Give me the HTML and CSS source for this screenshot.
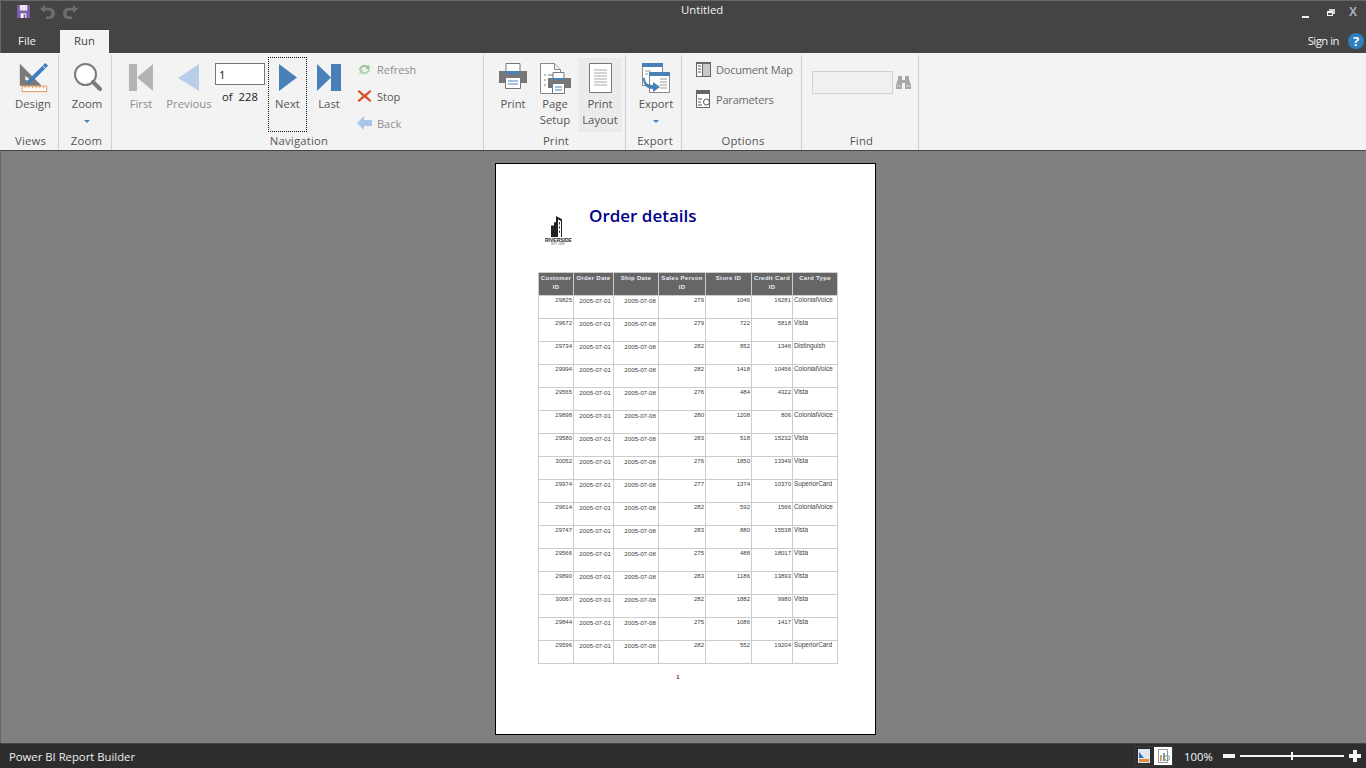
FILE: index.html
```html
<!DOCTYPE html>
<html lang="en">
<head>
  <meta charset="UTF-8">
  <title>Untitled</title>
  <link rel="stylesheet" href="styles.css">
</head>
<body>
<div class="app">
  <!-- title bar -->
  <div class="titlebar">
    <div class="quick">
      <svg class="save" width="13" height="13" viewBox="0 0 14 14"><path d="M0 0h14v14H0z" fill="#7d5ea8"/><path d="M3 0h8v6H3z" fill="#e8e4f0"/><path d="M4 9h6v5H4z" fill="#fff"/><path d="M7 10h2v4H7z" fill="#7d5ea8"/></svg>
      <svg width="16" height="15" viewBox="0 0 16 15"><path d="M6 1 1 5l5 4V6.500h3c2.500 0 3.500 1.500 3.500 3S11.500 12.500 9 12.500H7V15h3c3.500 0 6-2.200 6-5.500S13.500 3.800 10 3.800H6z" fill="#6d6d6d"/></svg>
      <svg width="16" height="15" viewBox="0 0 16 15"><path d="M10 1l5 4-5 4V6.500H7c-2.500 0-3.500 1.500-3.500 3s1 3 3.500 3h2V15H6c-3.500 0-6-2.200-6-5.500s2.500-5.700 6-5.700h4z" fill="#6d6d6d"/></svg>
    </div>
    <div class="doc-title">Untitled</div>
    <div class="win-btns">
      <span class="win-min"></span>
      <svg width="8" height="7" viewBox="0 0 8 7"><path d="M2 0h6v5H2z" fill="#c8cdd4"/><path d="M0 2h6v5H0z" fill="#f0f2f5"/><path d="M1 4h4v2H1z" fill="#555"/></svg>
      <span class="win-close">X</span>
    </div>
  </div>
  <div class="tabs">
    <span class="tab">File</span>
    <span class="tab tab-active">Run</span>
    <span class="signin">Sign in</span>
    <span class="help">?</span>
  </div>

  <!-- ribbon -->
  <div class="ribbon">
    <div class="group group-views">
      <div class="group-body">
        <div class="btn btn-design">
          <svg class="icon" viewBox="0 0 34 34"><path d="M2 2v24h24z M8 15v5h6z" fill="#7a7a7a" fill-rule="evenodd"/><path d="M30 1l3 3-18 18-5 2 2-5z" fill="#3f7cc0"/><path d="M27 4l3 3" stroke="#fff"/><path d="M4.500 26.500h27v6h-27z" fill="#fff" stroke="#e08a3c"/><path d="M8 27v2M12 27v2M16 27v2M20 27v2M24 27v2M28 27v2" stroke="#e08a3c"/></svg>
          <span>Design</span>
        </div>
      </div>
      <div class="group-label">Views</div>
    </div>

    <div class="group group-zoom">
      <div class="group-body">
        <div class="btn btn-zoom">
          <svg class="icon" width="30" height="34" viewBox="0 0 30 34"><circle cx="13.500" cy="17.500" r="10.500" fill="#fff" stroke="#7b7b7b" stroke-width="2"/><path d="M21 25l7 7" stroke="#7b7b7b" stroke-width="4" stroke-linecap="round"/></svg>
          <span>Zoom</span>
          <i class="caret"></i>
        </div>
      </div>
      <div class="group-label">Zoom</div>
    </div>

    <div class="group group-nav">
      <div class="group-body">
        <div class="btn btn-first off">
          <svg class="icon" width="24" height="27" viewBox="0 0 24 27"><path d="M0 0h8v27H0zM24 0v27L8 13.500z" fill="#b4b4b4"/></svg>
          <span>First</span>
        </div>
        <div class="btn btn-prev off">
          <svg class="icon" width="22" height="27" viewBox="0 0 22 27"><path d="M21 0v27L0 14z" fill="#b9cfe9"/></svg>
          <span>Previous</span>
        </div>
        <div class="pager">
          <input class="page-input" type="text" value="1">
          <div class="page-of">of&nbsp; 228</div>
        </div>
        <div class="btn btn-next">
          <svg class="icon" width="18" height="27" viewBox="0 0 18 27"><path d="M0 0v27l18-13.500z" fill="#4a80b8"/></svg>
          <span>Next</span>
        </div>
        <div class="btn btn-last">
          <svg class="icon" width="24" height="27" viewBox="0 0 24 27"><path d="M0 0v27l14-13.500zM14 0h10v27H14z" fill="#4a80b8"/></svg>
          <span>Last</span>
        </div>
        <div class="small-col">
          <div class="small off">
            <svg width="15" height="13" viewBox="0 0 15 13"><path d="M2 7a5.500 5.500 0 0 1 9-4l1.500-1.500V6H8l1.500-1.500A3.500 3.500 0 0 0 4 7z" fill="#9cc79c"/><path d="M13 6a5.500 5.500 0 0 1-9 4l-1.500 1.500V7H7L5.500 8.500A3.500 3.500 0 0 0 11 6z" fill="#b5d6b5"/></svg>
            <span>Refresh</span>
          </div>
          <div class="small small-stop">
            <svg width="15" height="14" viewBox="0 0 15 14"><path d="M2 1l5.500 4.500L13 1l1.500 1.500L9.500 7l5 4.500-1.500 1.500-5.500-4.500L2 13 .5 11.500l5-4.500-5-4.500z" fill="#d9532c"/></svg>
            <span>Stop</span>
          </div>
          <div class="small off">
            <svg width="15" height="14" viewBox="0 0 15 14"><path d="M7 0v4h8v6H7v4L0 7z" fill="#a9c6e8"/></svg>
            <span>Back</span>
          </div>
        </div>
      </div>
      <div class="group-label">Navigation</div>
    </div>

    <div class="group group-print">
      <div class="group-body">
        <div class="btn btn-print">
          <svg class="icon" width="28" height="26" viewBox="0 0 28 26"><path d="M7 .500h14v9H7z" fill="#fff" stroke="#777"/><path d="M0 8h28v12H0z" fill="#777"/><path d="M7 8h14v3H7z" fill="#4a80b8"/><path d="M6.500 14.500h15v11h-15z" fill="#fff" stroke="#777"/><path d="M9 18h10" stroke="#4a80b8"/><path d="M9 21h10" stroke="#4a80b8"/></svg>
          <span>Print</span>
        </div>
        <div class="btn btn-setup">
          <svg class="icon" width="31" height="31" viewBox="0 0 31 31"><path d="M.500.500h14l6 6v24H.500z" fill="#fff" stroke="#888"/><path d="M14.500.500v6h6" fill="#eee" stroke="#888"/><path d="M4 12h2M8 12h5M4 17h2M4 22h2" stroke="#777"/><path d="M13 9.500h11v7H13z" fill="#fff" stroke="#777"/><path d="M8 15h23v10H8z" fill="#777"/><path d="M13 15h11v2H13z" fill="#4a80b8"/><path d="M12.500 20.500h12v10h-12z" fill="#fff" stroke="#777"/><path d="M15 24h7M15 27h7" stroke="#4a80b8"/></svg>
          <span>Page<br>Setup</span>
        </div>
        <div class="btn btn-layout">
          <svg class="icon" width="23" height="30" viewBox="0 0 23 30"><path d="M.500.500h22v29H.500z" fill="#fff" stroke="#777"/><path d="M5 7h13M5 10h13M5 13h13M5 16h13M5 19h13M5 22h13" stroke="#aaa"/></svg>
          <span>Print<br>Layout</span>
        </div>
      </div>
      <div class="group-label">Print</div>
    </div>

    <div class="group group-export">
      <div class="group-body">
        <div class="btn btn-export">
          <svg class="icon" width="28" height="30" viewBox="0 0 28 30"><path d="M.500.500h20v22H.500z" fill="#fff" stroke="#888"/><path d="M0 0h21v4H0z" fill="#4a80b8"/><path d="M7.500 9.500h20v20h-20z" fill="#fff" stroke="#888"/><path d="M7 9h21v4H7z" fill="#4a80b8"/><path d="M18 16h7M18 19h7M18 22h7M18 25h7M3 8h6M3 11h3" stroke="#999"/><path d="M3 15c0 5 3 7 8 7v-3l7 5-7 5v-3c-6 0-10-4-10-11z" fill="#4a80b8"/></svg>
          <span>Export</span>
          <i class="caret"></i>
        </div>
      </div>
      <div class="group-label">Export</div>
    </div>

    <div class="group group-options">
      <div class="group-body">
        <div class="small-col opt-col">
          <div class="small">
            <svg width="15" height="15" viewBox="0 0 15 15"><path d="M0 0h15v15H0z" fill="#666"/><path d="M1 2h5v12H1z" fill="#fff"/><path d="M7 2h7v12H7z" fill="#c9c9c9"/><path d="M2 4h3M2 7h3M2 10h3" stroke="#555"/></svg>
            <span>Document Map</span>
          </div>
          <div class="small">
            <svg width="15" height="18" viewBox="0 0 15 18"><path d="M.500.500h13v17H.500z" fill="#fff" stroke="#666"/><path d="M0 0h14v4H0z" fill="#666"/><path d="M2 9h4M2 12h3M2 15h4" stroke="#555"/><circle cx="10.500" cy="12" r="3" fill="none" stroke="#555"/></svg>
            <span>Parameters</span>
          </div>
        </div>
      </div>
      <div class="group-label">Options</div>
    </div>

    <div class="group group-find">
      <div class="group-body">
        <div class="find-box"></div>
        <svg class="binoculars" width="15" height="13" viewBox="0 0 15 13"><path d="M2 0h4v4h3V0h4v3l2 6v4H9V7H6v6H0V9l2-6z" fill="#a8a8a8"/><path d="M1 10h4M10 10h4" stroke="#d8d8d8"/></svg>
      </div>
      <div class="group-label">Find</div>
    </div>
  </div>

  <!-- report -->
  <div class="canvas">
    <div class="page">
      <div class="report-head">
        <div class="logo">
          <svg width="16" height="22" viewBox="0 0 16 21" preserveAspectRatio="none"><path d="M1 10h3V7h2V1l6 3v17H1z" fill="#222"/><path d="M8 4l3 2v15H8z" fill="#fff"/><path d="M9 7h1v2H9zM9 11h1v2H9zM9 15h1v2H9z" fill="#222"/></svg>
          <div class="logo-name">RIVERSIDE</div>
          <div class="logo-sub">EST 1998</div>
        </div>
        <div class="report-title">Order details</div>
      </div>
      <table class="report">
        <colgroup><col class="c1"><col class="c2"><col class="c3"><col class="c4"><col class="c5"><col class="c6"><col class="c7"></colgroup>
        <thead>
          <tr><th>Customer ID</th><th>Order Date</th><th>Ship Date</th><th>Sales Person ID</th><th>Store ID</th><th>Credit Card ID</th><th>Card Type</th></tr>
        </thead>
        <tbody>
          <tr><td>29825</td><td class="d">2005-07-01</td><td class="d">2005-07-08</td><td>279</td><td>1046</td><td>16281</td><td class="t">ColonialVoice</td></tr>
          <tr><td>29672</td><td class="d">2005-07-01</td><td class="d">2005-07-08</td><td>279</td><td>722</td><td>5818</td><td class="t">Vista</td></tr>
          <tr><td>29734</td><td class="d">2005-07-01</td><td class="d">2005-07-08</td><td>282</td><td>852</td><td>1346</td><td class="t">Distinguish</td></tr>
          <tr><td>29994</td><td class="d">2005-07-01</td><td class="d">2005-07-08</td><td>282</td><td>1418</td><td>10456</td><td class="t">ColonialVoice</td></tr>
          <tr><td>29565</td><td class="d">2005-07-01</td><td class="d">2005-07-08</td><td>276</td><td>484</td><td>4322</td><td class="t">Vista</td></tr>
          <tr><td>29898</td><td class="d">2005-07-01</td><td class="d">2005-07-08</td><td>280</td><td>1208</td><td>806</td><td class="t">ColonialVoice</td></tr>
          <tr><td>29580</td><td class="d">2005-07-01</td><td class="d">2005-07-08</td><td>283</td><td>518</td><td>15232</td><td class="t">Vista</td></tr>
          <tr><td>30052</td><td class="d">2005-07-01</td><td class="d">2005-07-08</td><td>276</td><td>1850</td><td>13349</td><td class="t">Vista</td></tr>
          <tr><td>29974</td><td class="d">2005-07-01</td><td class="d">2005-07-08</td><td>277</td><td>1374</td><td>10370</td><td class="t">SuperiorCard</td></tr>
          <tr><td>29614</td><td class="d">2005-07-01</td><td class="d">2005-07-08</td><td>282</td><td>592</td><td>1566</td><td class="t">ColonialVoice</td></tr>
          <tr><td>29747</td><td class="d">2005-07-01</td><td class="d">2005-07-08</td><td>283</td><td>880</td><td>15538</td><td class="t">Vista</td></tr>
          <tr><td>29566</td><td class="d">2005-07-01</td><td class="d">2005-07-08</td><td>275</td><td>488</td><td>18017</td><td class="t">Vista</td></tr>
          <tr><td>29890</td><td class="d">2005-07-01</td><td class="d">2005-07-08</td><td>283</td><td>1186</td><td>13893</td><td class="t">Vista</td></tr>
          <tr><td>30067</td><td class="d">2005-07-01</td><td class="d">2005-07-08</td><td>282</td><td>1882</td><td>9980</td><td class="t">Vista</td></tr>
          <tr><td>29844</td><td class="d">2005-07-01</td><td class="d">2005-07-08</td><td>275</td><td>1086</td><td>1417</td><td class="t">Vista</td></tr>
          <tr><td>29596</td><td class="d">2005-07-01</td><td class="d">2005-07-08</td><td>282</td><td>552</td><td>19204</td><td class="t">SuperiorCard</td></tr>
        </tbody>
      </table>
      <div class="page-no">1</div>
    </div>
  </div>

  <!-- status bar -->
  <div class="statusbar">
    <span class="app-name">Power BI Report Builder</span>
    <div class="view-btns">
      <span class="view-btn">
        <svg width="14" height="14" viewBox="0 0 14 14"><path d="M1 0h12v14H1z" fill="#dfe6ee"/><path d="M2 3l5 6H2z" fill="#2f6fb0"/><path d="M2 10h10v3H2z" fill="#e08a3c"/></svg>
      </span>
      <span class="view-btn view-on">
        <svg width="14" height="14" viewBox="0 0 14 14"><path d="M2.500.500h9v13h-9z" fill="#fff" stroke="#999"/><path d="M4 6h2v6H4z" fill="#e0a050"/><path d="M7 4h2v8H7z" fill="#6a9bcf"/><circle cx="11" cy="9" r="2.500" fill="none" stroke="#6aa86a"/></svg>
      </span>
    </div>
    <span class="zoom-pct">100%</span>
    <span class="zoom-minus"></span>
    <span class="zoom-track"><i></i></span>
    <span class="zoom-plus"></span>
  </div>
</div>
</body>
</html>
```

FILE: styles.css
```css
* {
  box-sizing: border-box;
}
html, body {
  margin: 0;
  height: 100%;
  overflow: hidden;
}
body {
  font-family: "Open Sans", "Noto Sans", sans-serif;
  font-size: 11.3px;
}
.app {
  width: 1366px;
  height: 768px;
  display: flex;
  flex-direction: column;
  background: #808080;
}

/* title bar */
.titlebar {
  height: 30px;
  background: #444;
  border-top: 1px solid #666;
  border-left: 1px solid #666;
  display: flex;
  position: relative;
  flex: none;
}
.quick {
  display: flex;
  gap: 8px;
  padding: 3px 0 0 15px;
  align-items: flex-start;
}
.quick .save {
  margin: 1px 1px 0 1px;
}
.doc-title {
  position: absolute;
  left: 680px;
  top: 1px;
  color: #f2f2f2;
  font-size: 11.3px;
}
.win-btns {
  margin-left: auto;
  width: 66px;
  display: flex;
  align-items: flex-start;
  color: #fff;
  position: relative;
}
.win-min {
  width: 7px;
  height: 2px;
  background: #eef1f5;
  margin: 15px 0 0 2px;
}
.win-btns svg {
  margin: 8px 0 0 18px;
}
.win-close {
  margin: 4px 0 0 14px;
  font: bold 12px "Liberation Sans", sans-serif;
  color: #aab0b8;
}
.tabs {
  height: 23px;
  background: #444;
  border-left: 1px solid #666;
  display: flex;
  align-items: flex-end;
  flex: none;
  color: #f5f5f5;
}
.tab {
  height: 23px;
  line-height: 21px;
  text-align: center;
}
.tab:first-child {
  width: 59px;
  padding-right: 7px;
}
.tab-active {
  width: 49px;
  background: #f3f3f3;
  color: #444;
}
.signin {
  margin-left: auto;
  margin-right: 9px;
  line-height: 21px;
  height: 23px;
  letter-spacing: -.5px;
}
.help {
  width: 16px;
  height: 16px;
  border-radius: 50%;
  background: #2f7fc1;
  color: #fff;
  font-weight: bold;
  font-size: 13px;
  line-height: 16px;
  text-align: center;
  margin: 0 2px 4px 0;
}

/* ribbon */
.ribbon {
  height: 98px;
  background: #f3f3f3;
  border-bottom: 1px solid #444;
  display: flex;
  flex: none;
  color: #555;
}
.group {
  display: flex;
  flex-direction: column;
  border-right: 1px solid #cfcfcf;
  margin-top: 2px;
  flex: none;
}
.group-body {
  height: 77px;
  flex: none;
  display: flex;
  align-items: flex-start;
}
.group-label {
  height: 18px;
  line-height: 18px;
  padding-left: 3px;
  letter-spacing: .2px;
  text-align: center;
  color: #555;
  flex: none;
}
.group-views { width: 59px; }
.group-zoom { width: 53px; }
.group-nav { width: 372px; }
.group-print { width: 142px; }
.group-export { width: 56px; }
.group-options { width: 120px; }
.group-find { width: 117px; }

.btn {
  display: flex;
  flex-direction: column;
  align-items: center;
  text-align: center;
  line-height: 16px;
  flex: none;
  height: 75px;
  margin-top: 2px;
  color: #555;
}
.btn .icon {
  display: block;
  height: 34px;
  flex: none;
}
.btn span {
  margin-top: 5px;
}
.off, .off span {
  color: #8d8d8d;
}
.caret {
  width: 0;
  height: 0;
  border: 3px solid transparent;
  border-top: 3px solid #4a80b8;
  border-bottom: 0;
  margin-top: 8px;
}
.btn-design { width: 48px; margin-left: 9px; }
.btn-design .icon {
  width: 31px;
  height: 31px;
  margin: 5px 0 -2px;
}
.btn-zoom { width: 40px; margin-left: 8px; }
.btn-first { width: 42px; margin-left: 8px; }
.btn-prev { width: 50px; margin-left: 2px; }
.btn-first .icon, .btn-prev .icon, .btn-next .icon, .btn-last .icon {
  margin-top: 7px;
  height: 27px;
}
.pager {
  width: 50px;
  flex: none;
  padding-top: 8px;
  margin-left: 1px;
  color: #222;
}
.page-input {
  display: block;
  width: 50px;
  height: 22px;
  border: 1px solid #777;
  background: #fff;
  padding: 0 0 0 3px;
  font: 11.3px "Open Sans", sans-serif;
  color: #111;
  outline: none;
}
.page-of {
  text-align: center;
  margin-top: 4px;
  line-height: 16px;
}
.btn-next {
  width: 39px;
  margin-left: 3px;
  outline: 1px dotted #111;
  outline-offset: -1px;
}
.btn-last { width: 36px; margin-left: 4px; }
.small-col {
  display: flex;
  flex-direction: column;
  margin-left: 10px;
  padding-top: 5px;
  gap: 9px;
  font-size: 11px;
}
.small {
  display: flex;
  align-items: center;
  gap: 5px;
  height: 18px;
  color: #6a6a6a;
  white-space: nowrap;
}
.small-stop {
  color: #555;
}
.btn-print { width: 34px; margin-left: 12px; }
.btn-print .icon {
  height: 26px;
  margin: 6px 0 2px;
}
.btn-setup { width: 44px; margin-left: 3px; }
.btn-setup .icon {
  height: 31px;
  margin: 6px 0 -3px;
}
.btn-layout {
  width: 44px;
  margin-left: 1px;
  margin-top: 3px;
  height: 74px;
  background: #ebebeb;
}
.btn-layout .icon {
  height: 30px;
  margin: 5px 0 -2px;
}
.btn-export { width: 44px; margin-left: 8px; }
.btn-export .icon {
  height: 30px;
  margin: 6px 0 -2px;
}
.opt-col {
  margin-left: 14px;
  gap: 12px;
  letter-spacing: -.2px;
}
.find-box {
  width: 81px;
  height: 23px;
  margin: 16px 0 0 10px;
  border: 1px solid #d2d2d2;
  background: #f0f0f0;
}
.binoculars {
  margin: 21px 0 0 3px;
}

/* report page */
.canvas {
  flex: 1;
  padding: 12px 0 0 495px;
  background: #808080;
  border-left: 1px solid #666;
}
.page {
  width: 381px;
  height: 572px;
  margin-left: -1px;
  background: #fff;
  border: 1px solid #000;
  padding: 0 0 0 42px;
}
.report-head {
  height: 108px;
  display: flex;
}
.logo {
  width: 26px;
  margin: 51px 0 0 7px;
  text-align: center;
  flex: none;
}
.logo svg {
  display: block;
  margin: 0 auto;
}
.logo-name {
  font: bold 5px "Liberation Sans", sans-serif;
  color: #222;
  line-height: 6px;
  white-space: nowrap;
}
.logo-sub {
  font: 3px "Liberation Sans", sans-serif;
  color: #666;
  line-height: 3px;
}
.report-title {
  margin: 38px 0 0 18px;
  color: #00008b;
  font-size: 17px;
  font-weight: 600;
  line-height: 28px;
  white-space: nowrap;
}
.report {
  width: 299px;
  table-layout: fixed;
  border-collapse: collapse;
  font-family: "Liberation Sans", sans-serif;
  font-size: 6px;
  color: #404040;
}
.c1 { width: 35px; }
.c2 { width: 40px; }
.c3 { width: 45px; }
.c4 { width: 47px; }
.c5 { width: 46px; }
.c6 { width: 41px; }
.c7 { width: 45px; }
.report th, .report td {
  border: 1px solid #ccc;
  padding: 0;
  vertical-align: top;
  overflow: hidden;
}
.report th {
  height: 23px;
  background: #666;
  color: #e8eef6;
  font-weight: bold;
  line-height: 9px;
  padding: 1px 1px 0;
  text-align: center;
  letter-spacing: .3px;
}
.report td {
  height: 23px;
  text-align: right;
  padding: 0 1px 0 0;
  line-height: 8px;
}
.report td.d {
  padding-top: 1px;
  padding-right: 2px;
  font-size: 6.2px;
}
.report td.t {
  text-align: left;
  padding-left: 1px;
  white-space: nowrap;
  font-size: 6.4px;
}
.page-no {
  width: 280px;
  margin-top: 10px;
  text-align: center;
  font: bold 6px "Liberation Sans", sans-serif;
  color: #7a0f1e;
}

/* status bar */
.statusbar {
  height: 25px;
  flex: none;
  background: #2d2d2d;
  border-top: 1px solid #444;
  color: #eee;
  display: flex;
  align-items: center;
  padding-left: 9px;
}
.app-name {
  margin-right: auto;
}
.view-btns {
  display: flex;
  border: 1px solid #3c3c3c;
  height: 20px;
  width: 39px;
}
.view-btn {
  width: 19px;
  display: flex;
  align-items: center;
  justify-content: center;
}
.view-on {
  background: #fff;
}
.zoom-pct {
  margin-left: 11px;
  width: 39px;
  color: #f0f6ff;
}
.zoom-minus {
  width: 12px;
  height: 4px;
  background: #f5f5f5;
}
.zoom-track {
  width: 104px;
  height: 2px;
  margin: 0 5px;
  background: #f5f5f5;
  position: relative;
}
.zoom-track i {
  position: absolute;
  left: 51px;
  top: -3px;
  width: 2px;
  height: 8px;
  background: #f5f5f5;
}
.zoom-plus {
  width: 12px;
  height: 12px;
  margin-right: 5px;
  background:
    linear-gradient(#f5f5f5, #f5f5f5) center / 12px 4px no-repeat,
    linear-gradient(#f5f5f5, #f5f5f5) center / 4px 12px no-repeat;
}
```
